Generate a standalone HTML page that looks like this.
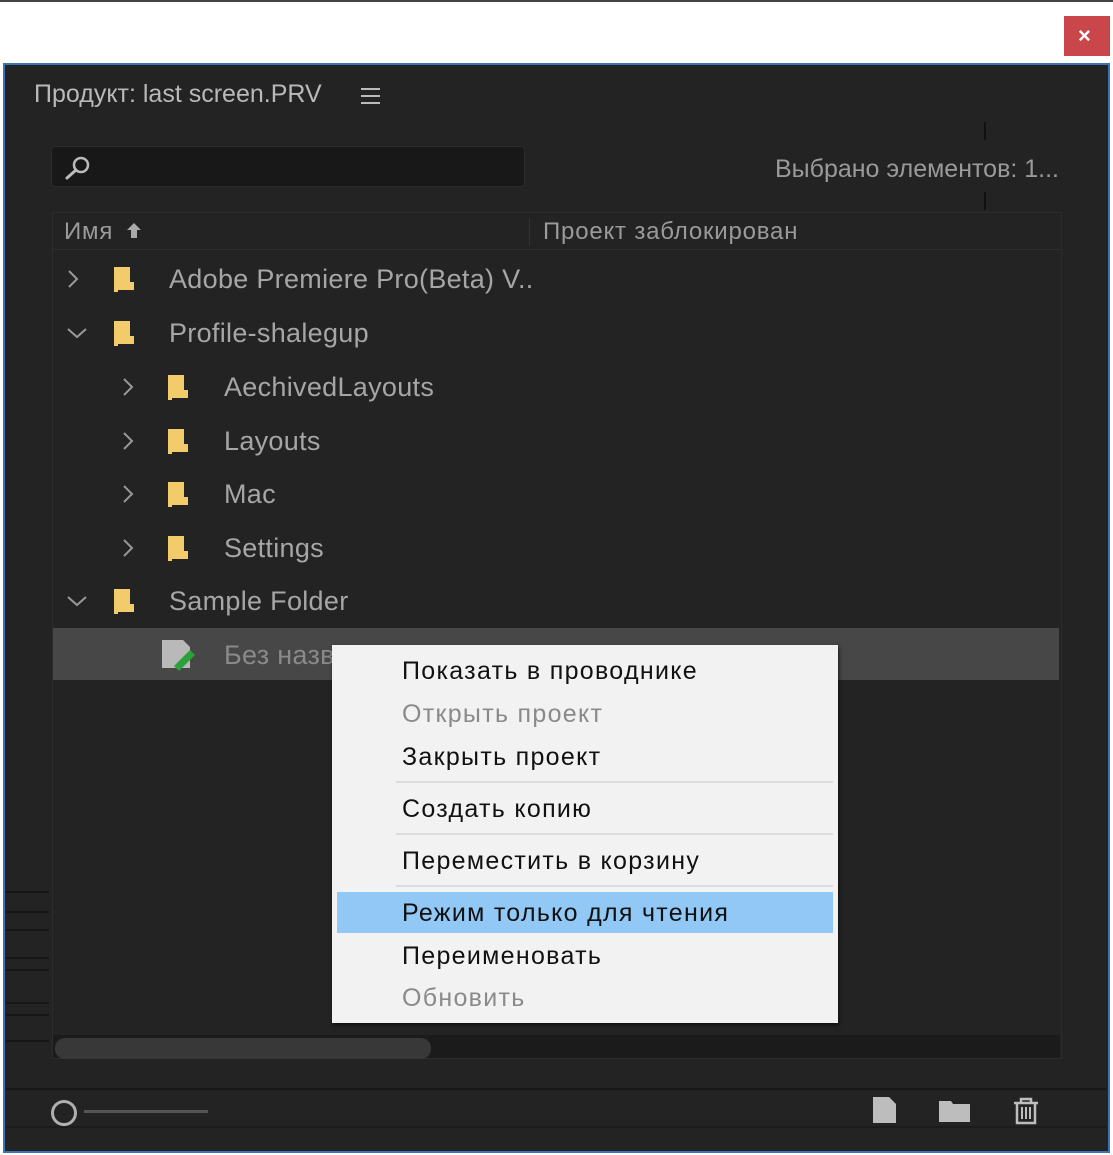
<!DOCTYPE html>
<html><head><meta charset="utf-8"><style>
*{margin:0;padding:0;box-sizing:border-box}
body{width:1113px;height:1155px;background:#fff;position:relative;overflow:hidden;font-family:"Liberation Sans","DejaVu Sans",sans-serif}
.a{position:absolute}
.t{position:absolute;white-space:nowrap;line-height:1}
.row{color:#a6a6a6;font-size:27px;letter-spacing:0.3px}
.menu .t{font-size:25px;color:#111;left:70px;letter-spacing:1.3px}
.ln{position:absolute;left:6px;width:43px;height:2px;background:#161616}
</style></head><body>
<div class="a" style="left:0;top:0;width:1113px;height:2px;background:#444"></div>
<div class="a" style="left:1064px;top:16px;width:46px;height:40px;background:#c9474a"></div>
<div class="t" style="left:1078px;top:25px;color:#fff;font-size:22px;font-weight:bold">×</div>
<div class="a" style="left:3px;top:63px;width:1107px;height:1090px;background:#232323;border:2px solid #3d72b5"></div>
<div class="t" style="left:34px;top:82px;color:#b9b9b9;font-size:25px">Продукт: last screen.PRV</div>
<div class="a" style="left:361px;top:88px;width:19px;height:2px;background:#bbb;box-shadow:0 7px 0 #bbb,0 14px 0 #bbb"></div>
<div class="a" style="left:51px;top:146px;width:474px;height:41px;background:#181818;border-radius:4px;border:1px solid #2c2c2c"></div>
<svg class="a" style="left:62px;top:154px" width="32" height="28"><circle cx="19" cy="11" r="7" fill="none" stroke="#bbb" stroke-width="2.5"/><line x1="14" y1="16" x2="5" y2="24" stroke="#bbb" stroke-width="3" stroke-linecap="round"/></svg>
<div class="a" style="left:984px;top:122px;width:2px;height:18px;background:#111"></div>
<div class="a" style="left:984px;top:192px;width:2px;height:18px;background:#111"></div>
<div class="t" style="right:54px;top:157px;color:#9a9a9a;font-size:25px">Выбрано элементов: 1...</div>
<div class="a" style="left:52px;top:212px;width:1010px;height:847px;background:#232323;border:1px solid #2c2c2c"></div>
<div class="a" style="left:53px;top:249px;width:1008px;height:1px;background:#2d2d2d"></div>
<div class="a" style="left:529px;top:218px;width:1px;height:28px;background:#333"></div>
<div class="t" style="left:64px;top:220px;color:#9a9a9a;font-size:24px;letter-spacing:0.8px">Имя</div>
<svg class="a" style="left:125px;top:221px" width="18" height="18"><path d="M9 2 L2 9 H6 V17 H12 V9 H16 Z" fill="#aaa"/></svg>
<div class="t" style="left:543px;top:220px;color:#9a9a9a;font-size:24px;letter-spacing:0.8px">Проект заблокирован</div>
<div class="a" style="left:53px;top:628px;width:1006px;height:52px;background:#474747"></div>

<svg class="a" style="left:0;top:0" width="1113" height="1155">
<g fill="none" stroke="#999" stroke-width="2">
<path d="M69 271 L77 279 L69 287"/>
<path d="M68 329 L77 337 L86 329"/>
<path d="M124 379 L132 387 L124 395"/>
<path d="M124 433 L132 441 L124 449"/>
<path d="M124 486 L132 494 L124 502"/>
<path d="M124 540 L132 548 L124 556"/>
<path d="M68 597 L77 605 L86 597"/>
</g>
<g fill="#f2cc6a">
<path d="M114 267 H130 V282 H134 V290 H118 V292 H114 Z"/>
<path d="M114 321 H130 V336 H134 V344 H118 V346 H114 Z"/>
<path d="M168 375 H184 V390 H188 V398 H172 V400 H168 Z"/>
<path d="M168 429 H184 V444 H188 V452 H172 V454 H168 Z"/>
<path d="M168 482 H184 V497 H188 V505 H172 V507 H168 Z"/>
<path d="M168 536 H184 V551 H188 V559 H172 V561 H168 Z"/>
<path d="M114 589 H130 V604 H134 V612 H118 V614 H114 Z"/>
</g>
<path d="M162 640 H183 L190 647 V668 H162 Z" fill="#b9b9b9"/>
<path d="M174 666 L190 650 L195 655 L179 671 Z" fill="#2aa13a"/>
</svg>
<div class="t row" style="left:169px;top:266px">Adobe Premiere Pro(Beta) V..</div>
<div class="t row" style="left:169px;top:320px">Profile-shalegup</div>
<div class="t row" style="left:224px;top:374px">AechivedLayouts</div>
<div class="t row" style="left:224px;top:428px">Layouts</div>
<div class="t row" style="left:224px;top:481px">Mac</div>
<div class="t row" style="left:224px;top:535px">Settings</div>
<div class="t row" style="left:169px;top:588px">Sample Folder</div>
<div class="t row" style="left:224px;top:642px;color:#8a8a8a">Без назв</div>

<div class="ln" style="top:891px"></div><div class="ln" style="top:911px"></div><div class="ln" style="top:929px"></div><div class="ln" style="top:957px"></div><div class="ln" style="top:969px"></div><div class="ln" style="top:1002px"></div><div class="ln" style="top:1014px"></div><div class="ln" style="top:1040px"></div>

<div class="a" style="left:53px;top:1035px;width:1007px;height:23px;background:#1b1b1b"></div>
<div class="a" style="left:55px;top:1038px;width:376px;height:21px;background:#383838;border-radius:10px"></div>

<div class="menu a" style="left:332px;top:645px;width:506px;height:378px;background:#f2f2f2;box-shadow:1px 2px 4px rgba(0,0,0,.6)">
<div class="t" style="top:14px">Показать в проводнике</div>
<div class="t" style="top:57px;color:#8a8a8a">Открыть проект</div>
<div class="t" style="top:100px">Закрыть проект</div>
<div class="a" style="left:64px;top:136px;width:437px;height:2px;background:#dcdcdc"></div>
<div class="t" style="top:152px">Создать копию</div>
<div class="a" style="left:64px;top:188px;width:437px;height:2px;background:#dcdcdc"></div>
<div class="t" style="top:204px">Переместить в корзину</div>
<div class="a" style="left:64px;top:240px;width:437px;height:2px;background:#dcdcdc"></div>
<div class="a" style="left:5px;top:247px;width:496px;height:41px;background:#91c8f6"></div>
<div class="t" style="top:256px">Режим только для чтения</div>
<div class="t" style="top:299px">Переименовать</div>
<div class="t" style="top:341px;color:#8a8a8a">Обновить</div>
</div>

<div class="a" style="left:6px;top:1088px;width:1100px;height:2px;background:#181818"></div>
<div class="a" style="left:6px;top:1126px;width:1100px;height:2px;background:#1b1b1b"></div>
<div class="a" style="left:51px;top:1100px;width:26px;height:26px;border:3px solid #b0b0b0;border-radius:50%"></div>
<div class="a" style="left:84px;top:1110px;width:124px;height:3px;background:#555"></div>
<svg class="a" style="left:860px;top:1090px" width="200" height="45">
<path d="M13 7 H29 L36 14 V33 H13 Z" fill="#bdbdbd"/>
<path d="M79 11 H91 L93 14 H110 V32 H79 Z" fill="#bdbdbd"/>
<g fill="none" stroke="#bdbdbd" stroke-width="2.5"><path d="M154 13 H178 M161 13 V9 H171 V13 M157 13 V33 H175 V13"/><path d="M162 17 V29 M166 17 V29 M170 17 V29" stroke-width="2"/></g>
</svg>
</body></html>
